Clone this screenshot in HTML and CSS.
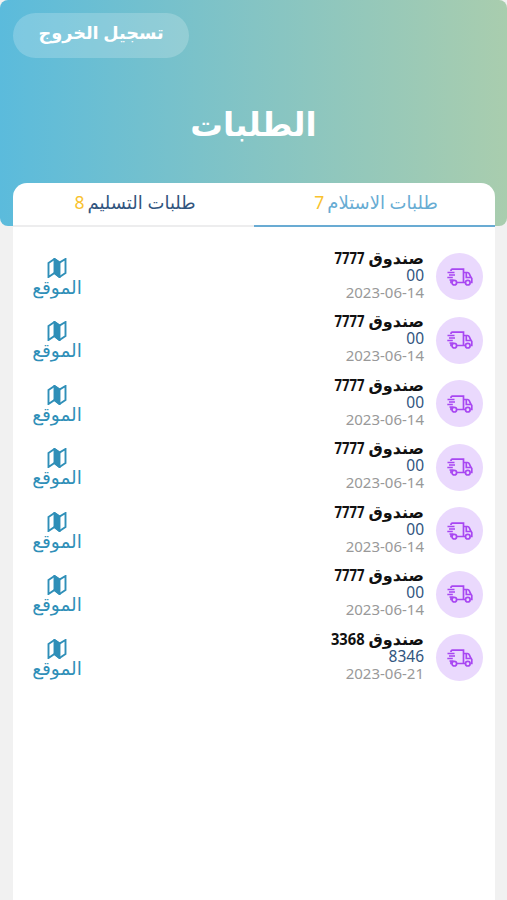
FILE: index.html
```
<!DOCTYPE html>
<html lang="ar" dir="rtl">
<head>
  <meta charset="UTF-8">
  <title>الطلبات</title>
  <link rel="stylesheet" href="styles.css">
</head>
<body>

  <!-- Shared icons -->
  <svg class="icon-defs" width="0" height="0">
    <symbol id="truck" viewBox="0 0 26 18">
      <path d="M4.500 3V2.500q0-1.300 1.300-1.300H17V14.500H10.300M17 4.500h4q1.200 0 1.700 1.200L24.300 9l1 1.500v4h-1.300M18.700 14.500H17M5.300 14.500H4.500v-2M19.800 5v4.500H24.500M1 4.500h7M2.500 7h6M0.800 9.500h5.500M3 12h4"/>
      <circle cx="7.800" cy="14.700" r="2.300"/>
      <circle cx="21.300" cy="14.700" r="2.300"/>
    </symbol>
    <symbol id="map" viewBox="0 0 20 20">
      <path class="fold" d="M7.500 1l5 3.500V19l-5-4z"/>
      <path d="M1.500 5L7.500 1l5 3.500L18.500 1v14l-6 4-5-4-6 4z"/>
    </symbol>
  </svg>

  <div class="header">
    <button class="logout-button"><span>تسجيل الخروج</span></button>
    <h1>الطلبات</h1>
  </div>

  <div class="card">
    <div class="tabs">
      <div class="tab active"><span class="tab-name">طلبات الاستلام</span><span class="count">7</span></div>
      <div class="tab"><span class="tab-name">طلبات التسليم</span><span class="count">8</span></div>
    </div>

    <div class="orders">
      <div class="order">
        <div class="truck-icon"><svg><use href="#truck"/></svg></div>
        <div class="info"><p class="box">صندوق <span class="number sevens">7777</span></p><p class="code">00</p><p class="date">2023-06-14</p></div>
        <a class="location"><svg><use href="#map"/></svg><span>الموقع</span></a>
      </div>
      <div class="order">
        <div class="truck-icon"><svg><use href="#truck"/></svg></div>
        <div class="info"><p class="box">صندوق <span class="number sevens">7777</span></p><p class="code">00</p><p class="date">2023-06-14</p></div>
        <a class="location"><svg><use href="#map"/></svg><span>الموقع</span></a>
      </div>
      <div class="order">
        <div class="truck-icon"><svg><use href="#truck"/></svg></div>
        <div class="info"><p class="box">صندوق <span class="number sevens">7777</span></p><p class="code">00</p><p class="date">2023-06-14</p></div>
        <a class="location"><svg><use href="#map"/></svg><span>الموقع</span></a>
      </div>
      <div class="order">
        <div class="truck-icon"><svg><use href="#truck"/></svg></div>
        <div class="info"><p class="box">صندوق <span class="number sevens">7777</span></p><p class="code">00</p><p class="date">2023-06-14</p></div>
        <a class="location"><svg><use href="#map"/></svg><span>الموقع</span></a>
      </div>
      <div class="order">
        <div class="truck-icon"><svg><use href="#truck"/></svg></div>
        <div class="info"><p class="box">صندوق <span class="number sevens">7777</span></p><p class="code">00</p><p class="date">2023-06-14</p></div>
        <a class="location"><svg><use href="#map"/></svg><span>الموقع</span></a>
      </div>
      <div class="order">
        <div class="truck-icon"><svg><use href="#truck"/></svg></div>
        <div class="info"><p class="box">صندوق <span class="number sevens">7777</span></p><p class="code">00</p><p class="date">2023-06-14</p></div>
        <a class="location"><svg><use href="#map"/></svg><span>الموقع</span></a>
      </div>
      <div class="order">
        <div class="truck-icon"><svg><use href="#truck"/></svg></div>
        <div class="info"><p class="box">صندوق <span class="number">3368</span></p><p class="code">8346</p><p class="date">2023-06-21</p></div>
        <a class="location"><svg><use href="#map"/></svg><span>الموقع</span></a>
      </div>
    </div>
  </div>

</body>
</html>
```

FILE: styles.css
```
* {
  box-sizing: border-box;
}

body {
  margin: 0;
  height: 900px;
  overflow: hidden;
  display: flex;
  flex-direction: column;
  background-color: #f1f1f1;
  font-family: "Noto Sans", "DejaVu Sans", sans-serif;
}

.icon-defs {
  display: none;
}

.header {
  height: 226px;
  flex: none;
  padding: 13px;
  border-radius: 8px;
  background: linear-gradient(to right, #5bbbdc, #84c4c4 50%, #a9cdae);
  color: #fff;
  display: flex;
  flex-direction: column;
  align-items: center;
}

.logout-button {
  align-self: flex-end;
  width: 176px;
  height: 45px;
  padding: 0 0 7px;
  border: none;
  border-radius: 23px;
  background-color: rgba(255, 255, 255, 0.2);
  color: #fff;
  font-family: inherit;
  font-size: 17.7px;
  font-weight: bold;
  cursor: pointer;
}

h1 {
  margin: 46px 0 0;
  font-size: 32.5px;
  line-height: 40px;
}

.card {
  flex: 1;
  margin: -43px 12px 0 13px;
  border-radius: 14px 14px 0 0;
  background-color: #fff;
}

.tabs {
  display: flex;
  height: 44px;
}

.tab {
  flex: 1;
  display: flex;
  justify-content: center;
  align-items: baseline;
  gap: 3px;
  padding: 7px 0 0 3px;
  line-height: 24px;
  border-bottom: 2px solid #ededee;
  color: #31557e;
  font-size: 18px;
}

.tab.active {
  border-bottom-color: #69abd3;
  color: #67acd3;
}

.count {
  color: #f9c22e;
  font-size: 17.5px;
}

.orders {
  padding: 18px 12px 0 19px;
}

.order {
  display: flex;
  align-items: center;
  height: 63.5px;
}

.truck-icon {
  width: 47px;
  height: 47px;
  margin-left: 12px;
  border-radius: 50%;
  background-color: #ead9fd;
  display: flex;
  justify-content: center;
  align-items: center;
}

.truck-icon svg {
  width: 27px;
  height: 18px;
  margin-right: 1px;
  fill: none;
  stroke: #a847f2;
  stroke-width: 1.7;
}

.info {
  flex: 1;
  padding-bottom: 3px;
}

.info p {
  margin: 0;
  font-size: 15px;
  line-height: 17px;
}

.info .box {
  color: #111;
  font-size: 16px;
  font-weight: bold;
}

.number {
  display: inline-block;
  transform: scaleX(0.92);
  transform-origin: right;
}

.sevens {
  transform: scaleX(0.82);
}

.info .code {
  color: #31557e;
  font-size: 15.5px;
}

.info .date {
  color: #999;
}

.location {
  width: 50px;
  display: flex;
  flex-direction: column;
  align-items: center;
  color: #2f8fb8;
  font-size: 18.5px;
  line-height: 18px;
  white-space: nowrap;
}

.location svg {
  width: 20px;
  height: 20px;
  margin-right: 1px;
  fill: none;
  stroke: #2f8fb8;
  stroke-width: 1.9;
}

.fold {
  fill: #2f8fb8;
}
```
